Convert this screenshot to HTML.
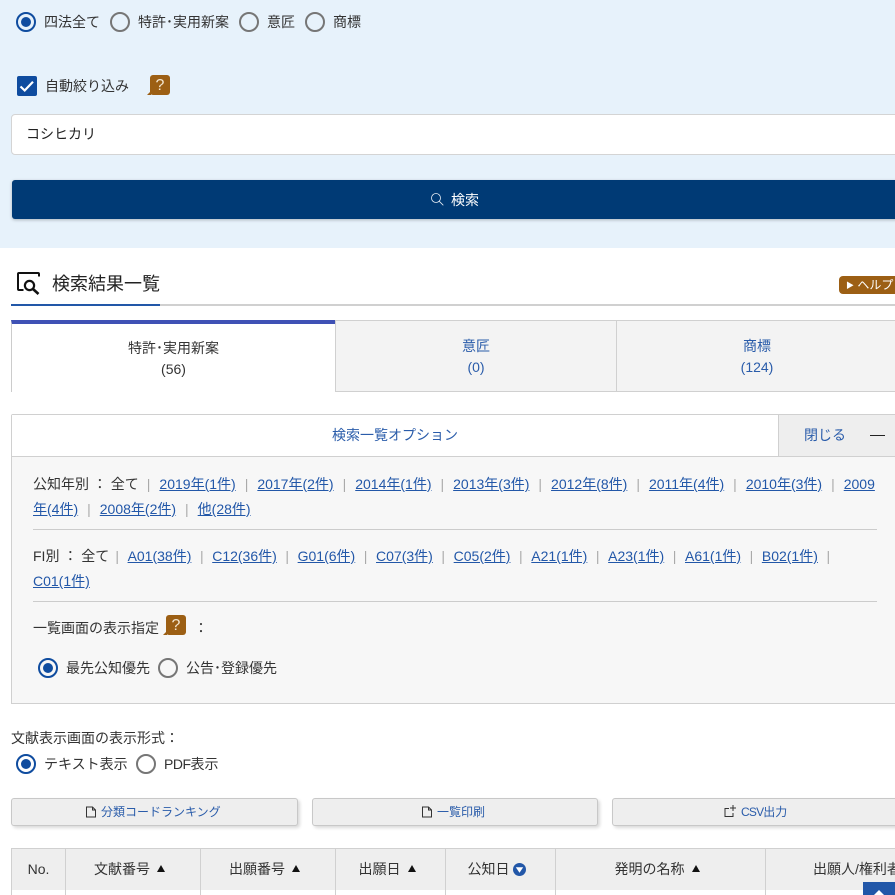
<!DOCTYPE html>
<html lang="ja"><head><meta charset="utf-8">
<style>
html,body{margin:0;padding:0;width:895px;height:895px;overflow:hidden;background:#fff}
body{position:relative;font-family:"Liberation Sans","Noto Sans CJK JP",sans-serif;font-size:14px;color:#333}
.a{position:absolute;white-space:nowrap;line-height:20px}
.b{position:absolute;box-sizing:border-box}
.r{position:absolute;box-sizing:border-box;width:20px;height:20px;border-radius:50%;border:2px solid #767676;background:transparent}
.r.on{border-color:#0f4c9f}
.r.on:after{content:"";position:absolute;left:3px;top:3px;width:10px;height:10px;border-radius:50%;background:#0f4c9f}
a{color:#2257a8;text-decoration:underline}
.l{color:#2a5caa}
.s{color:#aaa;padding:0 9px}
.fi .s{padding:0 8.600px}
.f{margin-left:-1px}
.fi .f{margin-left:-2.500px}
.q{position:absolute;width:20px;height:20px;background:#9c5f14;border-radius:3px;color:#f3e6d0;font-weight:normal;font-size:16px;line-height:21px;text-align:center}
.q:after{content:"";position:absolute;left:-3px;bottom:0;width:0;height:0;border-bottom:4px solid #9c5f14;border-left:4px solid transparent}
.btn{position:absolute;top:798px;height:28px;box-sizing:border-box;background:#eee;border:1px solid #c8c8c8;border-radius:3px;box-shadow:2px 2px 3px rgba(0,0,0,.15)}
.th{position:absolute;top:848px;height:43px;box-sizing:border-box;background:#eee;border:1px solid #d0d0d0;text-align:center;line-height:41px;font-size:14px;color:#333}
.p{padding-right:7px}
.tri{display:inline-block;width:0;height:0;border-left:4px solid transparent;border-right:4px solid transparent;border-bottom:7px solid #111;margin-left:7px;vertical-align:2px}
</style></head><body>
<div class="b" style="left:0;top:0;width:895px;height:248px;background:#e7f2fb"></div>

<div class="r on" style="left:16px;top:12px"></div><div class="a" style="left:44px;top:12px">四法全て</div>
<div class="r" style="left:110px;top:12px"></div><div class="a" style="left:138px;top:12px">特許･実用新案</div>
<div class="r" style="left:239px;top:12px"></div><div class="a" style="left:267px;top:12px">意匠</div>
<div class="r" style="left:305px;top:12px"></div><div class="a" style="left:333px;top:12px">商標</div>

<div class="b" style="left:17px;top:76px;width:20px;height:20px;background:#0f4c9f;border-radius:2px"><svg width="20" height="20" viewBox="0 0 20 20" style="display:block"><path d="M3.500 10.500l4.200 4L16 5.800" fill="none" stroke="#fff" stroke-width="2.200"/></svg></div>
<div class="a" style="left:45px;top:76px">自動絞り込み</div>
<div class="q" style="left:150px;top:75px">?</div>

<div class="b" style="left:11px;top:114px;width:900px;height:41px;background:#fff;border:1px solid #d4d4d4;border-radius:4px"></div>
<div class="a" style="left:26px;top:124px;font-size:14px;color:#222;line-height:20px">コシヒカリ</div>

<div class="b" style="left:12px;top:180px;width:900px;height:39px;background:#003a75;border-radius:3px;box-shadow:0 1px 3px rgba(0,0,0,.25)"></div>
<svg class="b" style="left:430px;top:192px" width="15" height="15" viewBox="0 0 15 15"><circle cx="6" cy="6" r="4.500" fill="none" stroke="#e8eef5" stroke-width=".8"/><path d="M9.300 9.300l4 4" stroke="#e8eef5" stroke-width=".8"/></svg>
<div class="a" style="left:451px;top:190px;color:#fff">検索</div>

<svg class="b" style="left:16px;top:271px" width="25" height="25" viewBox="0 0 25 25"><path d="M7.500 19H3Q2 19 2 18V3Q2 2 3 2H22Q23 2 23 3V5.500" fill="none" stroke="#111" stroke-width="2"/><circle cx="13.500" cy="14.500" r="4.600" fill="none" stroke="#111" stroke-width="2.200"/><path d="M17 18l5.500 5" stroke="#111" stroke-width="2.600"/></svg>
<div class="a" style="left:52px;top:272px;font-size:18px;line-height:24px;color:#222">検索結果一覧</div>
<div class="b" style="left:11px;top:304px;width:884px;height:2px;background:#d0d0d0"></div>
<div class="b" style="left:11px;top:304px;width:149px;height:2px;background:#2257a8"></div>
<div class="b" style="left:839px;top:276px;width:70px;height:18px;background:#9c5f14;border-radius:4px 0 0 4px;color:#fff;font-size:12px;line-height:18px;padding-left:7px"><span style="font-size:8px;position:relative;top:-1px">▶</span>&nbsp;ヘルプ</div>

<div class="b" style="left:11px;top:320px;width:325px;height:72px;background:#fff;border-left:1px solid #ccc;border-top:4px solid #3f51b5"></div>
<div class="b" style="left:335px;top:320px;width:282px;height:72px;background:#f3f3f3;border:1px solid #d0d0d0"></div>
<div class="b" style="left:616px;top:320px;width:290px;height:72px;background:#f3f3f3;border:1px solid #d0d0d0"></div>
<div class="a" style="left:11px;width:325px;top:338px;text-align:center;font-size:14px">特許･実用新案</div>
<div class="a" style="left:11px;width:325px;top:359px;text-align:center">(56)</div>
<div class="a l" style="left:335px;width:282px;top:336px;text-align:center">意匠</div>
<div class="a l" style="left:335px;width:282px;top:357px;text-align:center">(0)</div>
<div class="a l" style="left:616px;width:282px;top:336px;text-align:center">商標</div>
<div class="a l" style="left:616px;width:282px;top:357px;text-align:center">(124)</div>

<div class="b" style="left:11px;top:414px;width:900px;height:290px;background:#f7f7f7;border:1px solid #d0d0d0;border-radius:2px 0 0 0"></div>
<div class="b" style="left:12px;top:415px;width:766px;height:41px;background:#fff"></div>
<div class="b" style="left:778px;top:415px;width:120px;height:41px;background:#eee;border-left:1px solid #d0d0d0"></div>
<div class="b" style="left:12px;top:456px;width:883px;height:1px;background:#d0d0d0"></div>
<div class="a l" style="left:12px;width:766px;top:425px;text-align:center;font-size:14px">検索一覧オプション</div>
<div class="a l" style="left:804px;top:425px">閉じる</div>
<div class="b" style="left:870px;top:435px;width:15px;height:1px;background:#222"></div>

<div class="a" style="left:33px;top:474px">公知年別 ： 全て<span class="s f">|</span><a>2019年(1件)</a><span class="s">|</span><a>2017年(2件)</a><span class="s">|</span><a>2014年(1件)</a><span class="s">|</span><a>2013年(3件)</a><span class="s">|</span><a>2012年(8件)</a><span class="s">|</span><a>2011年(4件)</a><span class="s">|</span><a>2010年(3件)</a><span class="s">|</span><a>2009</a></div>
<div class="a" style="left:33px;top:499px"><a>年(4件)</a><span class="s">|</span><a>2008年(2件)</a><span class="s">|</span><a>他(28件)</a></div>
<div class="b" style="left:33px;top:529px;width:844px;height:1px;background:#ccc"></div>
<div class="a fi" style="left:33px;top:546px">FI別 ： 全て<span class="s f">|</span><a>A01(38件)</a><span class="s">|</span><a>C12(36件)</a><span class="s">|</span><a>G01(6件)</a><span class="s">|</span><a>C07(3件)</a><span class="s">|</span><a>C05(2件)</a><span class="s">|</span><a>A21(1件)</a><span class="s">|</span><a>A23(1件)</a><span class="s">|</span><a>A61(1件)</a><span class="s">|</span><a>B02(1件)</a><span class="s">|</span></div>
<div class="a" style="left:33px;top:571px"><a>C01(1件)</a></div>
<div class="b" style="left:33px;top:601px;width:844px;height:1px;background:#ccc"></div>
<div class="a" style="left:33px;top:618px;font-size:14px">一覧画面の表示指定</div>
<div class="q" style="left:166px;top:615px">?</div>
<div class="a" style="left:194px;top:618px">：</div>
<div class="r on" style="left:38px;top:658px"></div><div class="a" style="left:66px;top:658px">最先公知優先</div>
<div class="r" style="left:158px;top:658px"></div><div class="a" style="left:186px;top:658px">公告･登録優先</div>

<div class="a" style="left:11px;top:728px">文献表示画面の表示形式：</div>
<div class="r on" style="left:16px;top:754px"></div><div class="a" style="left:44px;top:754px">テキスト表示</div>
<div class="r" style="left:136px;top:754px"></div><div class="a" style="left:164px;top:754px"><span style="letter-spacing:-.5px">PDF</span>表示</div>

<div class="btn" style="left:11px;width:287px"></div>
<div class="btn" style="left:312px;width:286px"></div>
<div class="btn" style="left:612px;width:300px"></div>
<svg class="b" style="left:85px;top:806px" width="12" height="12" viewBox="0 0 12 12"><path d="M1.500 1h6l3 3v7h-9zM7.500 1v3h3" fill="none" stroke="#333" stroke-width="1"/></svg>
<div class="a l" style="left:101px;top:802px;font-size:12px">分類コードランキング</div>
<svg class="b" style="left:421px;top:806px" width="12" height="12" viewBox="0 0 12 12"><path d="M1.500 1h6l3 3v7h-9zM7.500 1v3h3" fill="none" stroke="#333" stroke-width="1"/></svg>
<div class="a l" style="left:437px;top:802px;font-size:12px">一覧印刷</div>
<svg class="b" style="left:724px;top:805px" width="13" height="13" viewBox="0 0 13 13"><path d="M5 3.500H1v8h8V8M9 0v6M6 3h6" fill="none" stroke="#333" stroke-width="1"/></svg>
<div class="a l" style="left:741px;top:802px;font-size:12px"><span style="letter-spacing:-.8px">CSV</span>出力</div>

<div class="th" style="left:11px;width:55px">No.</div>
<div class="th p" style="left:65px;width:136px">文献番号<span class="tri"></span></div>
<div class="th p" style="left:200px;width:136px">出願番号<span class="tri"></span></div>
<div class="th p" style="left:335px;width:111px">出願日<span class="tri"></span></div>
<div class="th p" style="left:445px;width:111px">公知日 <svg width="13" height="13" viewBox="0 0 13 13" style="vertical-align:-2px"><circle cx="6.500" cy="6.500" r="6.500" fill="#2257a8"/><path d="M2.800 4.200h7.400L6.500 9.800z" fill="#fff"/></svg></div>
<div class="th p" style="left:555px;width:211px">発明の名称<span class="tri"></span></div>
<div class="th" style="left:765px;width:150px;text-align:left;padding-left:47px">出願人/権利者</div>
<div class="b" style="left:11px;top:890px;width:884px;height:5px;background:#fff"></div>
<div class="b" style="left:65px;top:890px;width:1px;height:5px;background:#d0d0d0"></div>
<div class="b" style="left:200px;top:890px;width:1px;height:5px;background:#d0d0d0"></div>
<div class="b" style="left:335px;top:890px;width:1px;height:5px;background:#d0d0d0"></div>
<div class="b" style="left:445px;top:890px;width:1px;height:5px;background:#d0d0d0"></div>
<div class="b" style="left:555px;top:890px;width:1px;height:5px;background:#d0d0d0"></div>
<div class="b" style="left:765px;top:890px;width:1px;height:5px;background:#d0d0d0"></div>
<div class="b" style="left:11px;top:890px;width:1px;height:5px;background:#d0d0d0"></div>
<div class="b" style="left:863px;top:882px;width:32px;height:13px;background:#2257a8"><div style="position:absolute;left:10px;top:8px;width:0;height:0;border-left:6px solid transparent;border-right:6px solid transparent;border-bottom:6px solid #fff"></div></div>
</body></html>
